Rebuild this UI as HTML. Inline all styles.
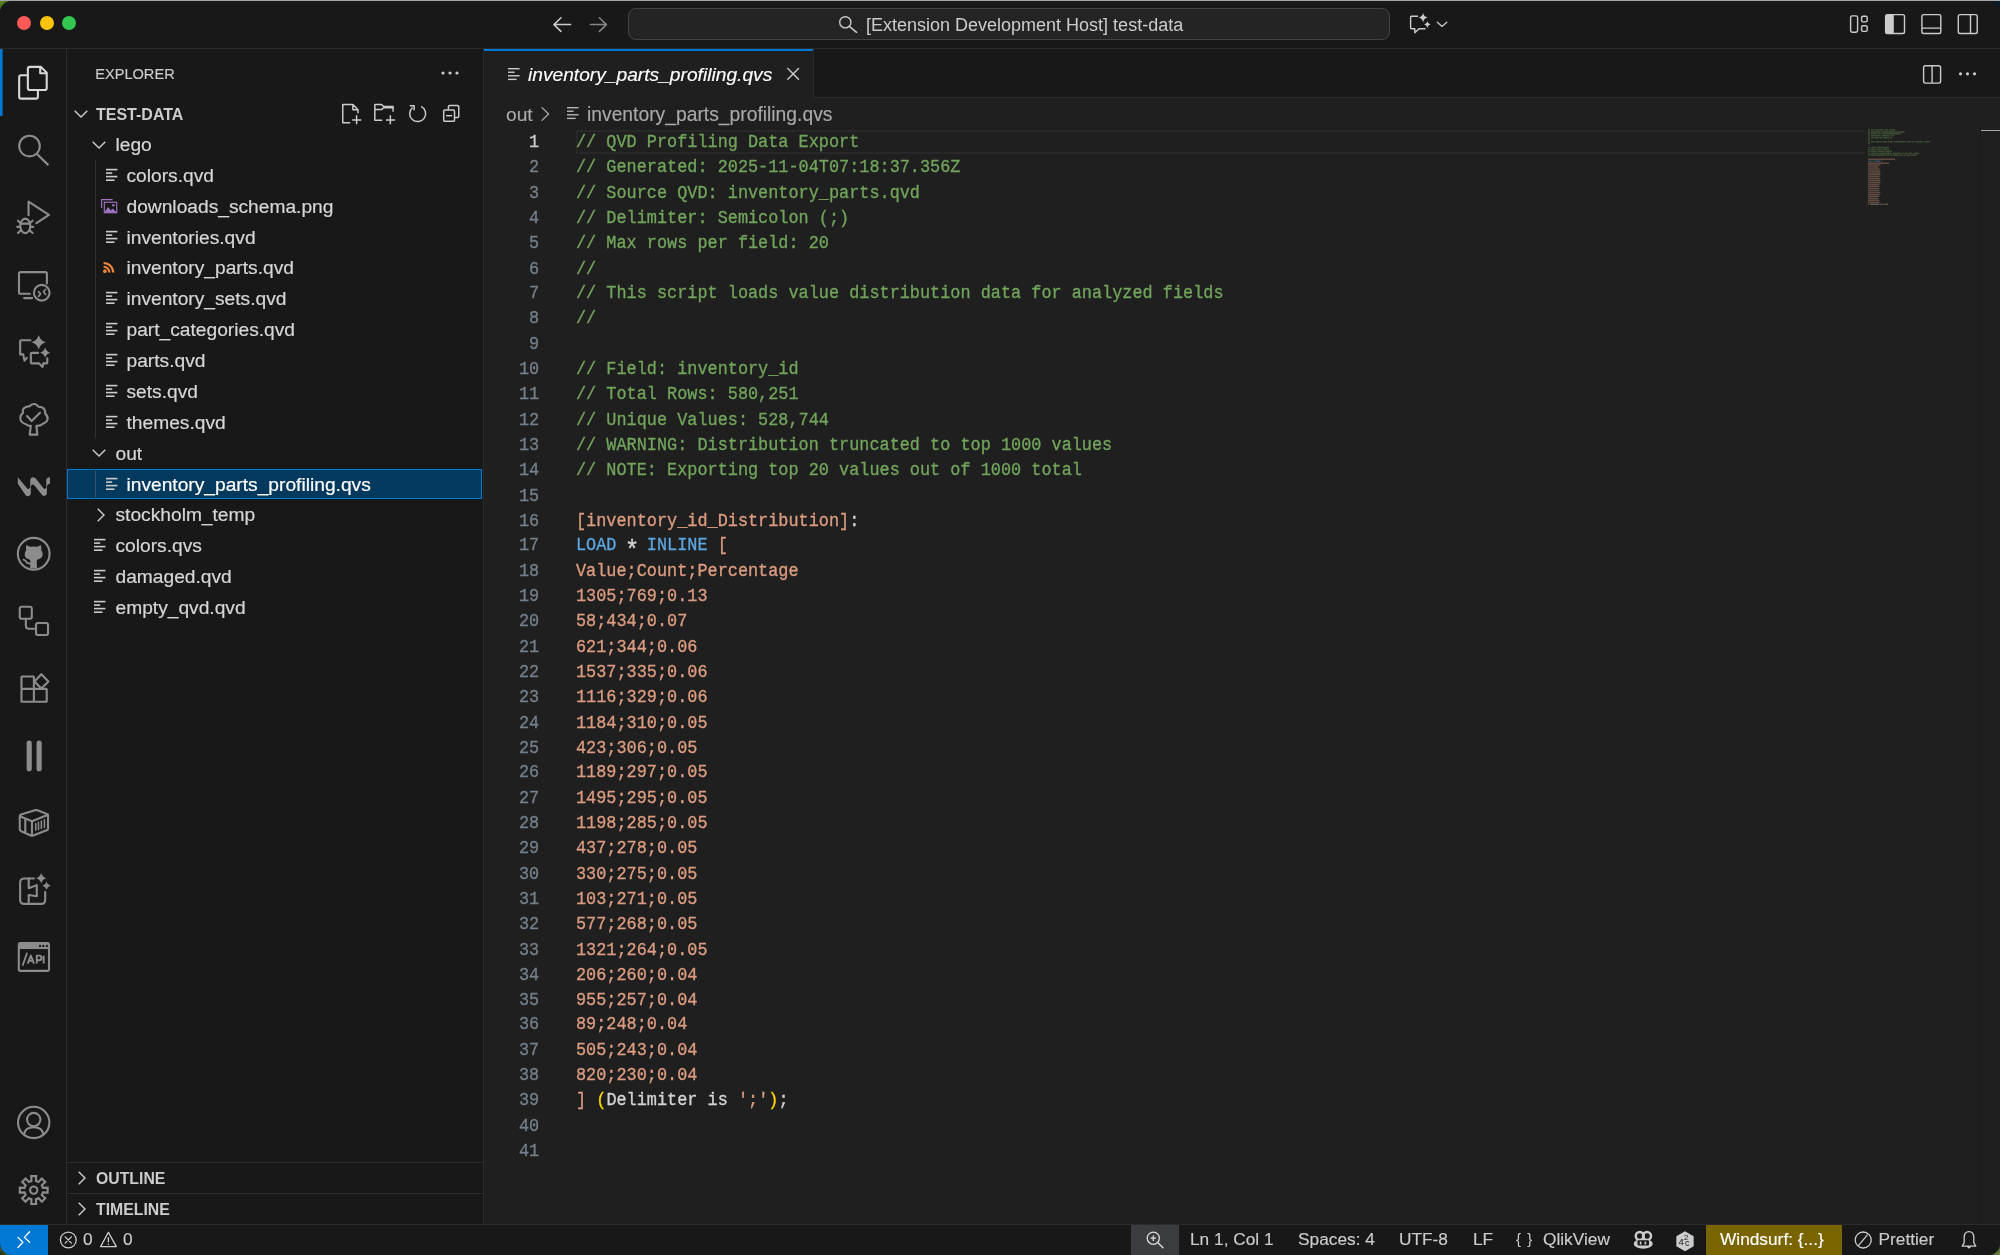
<!DOCTYPE html>
<html><head><meta charset="utf-8">
<style>
*{margin:0;padding:0;box-sizing:border-box}
html,body{width:2000px;height:1255px;overflow:hidden;background:#0b2a2a}
body{background:linear-gradient(#a4a4a4,#a4a4a4) 0 0/2000px 1px no-repeat,radial-gradient(circle at 0 0,#6a8a20 0,#3a6a20 8px,#0a2020 14px) 0 0/20px 20px no-repeat,radial-gradient(circle at 100% 0,#0a1a28 0,#06182a 14px) 100% 0/20px 20px no-repeat,radial-gradient(circle at 0 100%,#1a2a18 0,#6a7a30 12px) 0 100%/20px 20px no-repeat,radial-gradient(circle at 100% 100%,#7a8a40 0,#1a3a20 14px) 100% 100%/20px 20px no-repeat,#0b2a2a}
body{-webkit-font-smoothing:antialiased;position:relative;font-family:"Liberation Sans",sans-serif;color:#cccccc}
.abs{position:absolute}
#win{position:absolute;left:0;top:1px;width:2000px;height:1254px;background:#181818;border-radius:12px;overflow:hidden;will-change:transform}
#win>.abs{margin-top:-1px}
#title{left:0;top:0;width:2000px;height:49px;background:#181818;border-bottom:1px solid #2b2b2b}
.tl{position:absolute;top:15.9px;width:14px;height:14px;border-radius:50%}
#act{left:0;top:49px;width:67px;height:1175px;background:#181818;border-right:1px solid #2b2b2b}
#side{left:67px;top:49px;width:417px;height:1175px;background:#181818;border-right:1px solid #2b2b2b}
#editor{left:484px;top:49px;width:1516px;height:1175px;background:#1f1f1f}
#tabs{left:0;top:0;width:1516px;height:49px;background:#181818;border-bottom:1px solid #2b2b2b}
#status{left:0;top:1224px;width:2000px;height:31px;background:#181818;border-top:1px solid #2b2b2b;font-size:16.8px}
.row{position:absolute;left:0;width:416px;height:30.87px;line-height:30.87px;font-size:18.2px;white-space:nowrap;color:#cccccc;-webkit-text-stroke:0.2px;transform:translateY(0.9px)}
.code{position:absolute;left:92px;font-family:"Liberation Mono",monospace;font-size:16.88px;white-space:pre;line-height:22.327px;transform:scaleY(1.13);transform-origin:0 0;-webkit-text-stroke:0.3px}
.ln{position:absolute;left:0;width:55.2px;text-align:right;font-family:"Liberation Mono",monospace;font-size:16.85px;line-height:22.327px;color:#76808b;transform:scaleY(1.13);transform-origin:0 0;-webkit-text-stroke:0.3px}
.c{color:#72a55c}.k{color:#5ca6e0}.s{color:#dc9c80}.w{color:#d4d4d4}.y{color:#ffd700}
svg{position:absolute;overflow:visible}
</style></head><body>
<div id="win">
 <div id="title" class="abs">
  <div class="tl" style="left:17.2px;background:#ff5a57"></div>
  <div class="tl" style="left:39.8px;background:#fbc40c"></div>
  <div class="tl" style="left:62px;background:#33c650"></div>
<svg class="abs" style="left:0;top:0" width="2000" height="48"><path d="M561 17.8 L553.9 24.6 L561 31.4 M554 24.6 H570.6" fill="none" stroke="#cccccc" stroke-width="1.5" stroke-linecap="round" stroke-linejoin="round"/><path d="M599.4 17.8 L606.4 24.6 L599.4 31.4 M606.3 24.6 H590.4" fill="none" stroke="#868686" stroke-width="1.5" stroke-linecap="round" stroke-linejoin="round"/><path d="M1418 16.2 H1411.4 Q1410.6 16.2 1410.6 17 V27.8 Q1410.6 28.8 1411.4 28.8 H1414.8 V32.8 L1419 28.8 H1425.5" fill="none" stroke="#cccccc" stroke-width="1.4" stroke-linejoin="round"/><path d="M1423.1 12.8 Q1423.8 17 1428 17.6 Q1423.8 18.3 1423.1 22.4 Q1422.4 18.3 1418.3 17.6 Q1422.4 17 1423.1 12.8 Z" fill="#cccccc"/><path d="M1427.4 21.3 Q1427.9 24 1430.6 24.6 Q1427.9 25.1 1427.4 27.9 Q1426.9 25.1 1424.2 24.6 Q1426.9 24 1427.4 21.3 Z" fill="#cccccc"/><path d="M1437.3 22.2 L1442 26.4 L1446.8 22.2" fill="none" stroke="#cccccc" stroke-width="1.3" stroke-linecap="round" stroke-linejoin="round"/><g fill="none" stroke="#cccccc" stroke-width="1.4"><rect x="1850.6" y="15.9" width="7" height="16.3" rx="1.6"/><rect x="1861.6" y="16.3" width="5.6" height="5.6" rx="1.4"/><rect x="1861.6" y="25.8" width="5.6" height="5.6" rx="1.4"/><rect x="1885.6" y="14.6" width="18.9" height="18.9" rx="1.8"/><rect x="1921.9" y="14.6" width="18.9" height="18.9" rx="1.8"/><path d="M1922 28.1 H1940.8"/><rect x="1958.3" y="14.6" width="18.9" height="18.9" rx="1.8"/><path d="M1970.5 14.6 V33.5"/></g><rect x="1886" y="15" width="7.8" height="18.2" fill="#cccccc"/></svg>
<div class="abs" style="left:628px;top:8px;width:762px;height:32.4px;border:1px solid #444444;border-radius:8px;background:#242424"></div>
<svg class="abs" style="left:0;top:0" width="2000" height="48"><circle cx="845.3" cy="22.3" r="5.6" fill="none" stroke="#cccccc" stroke-width="1.4"/><path d="M849.3 26.4 L856.6 32.3" stroke="#cccccc" stroke-width="1.5" stroke-linecap="round"/></svg>
<div class="abs" style="left:866px;top:8.6px;height:32px;line-height:32px;font-size:18px;color:#cccccc;white-space:nowrap">[Extension Development Host] test-data</div>
 </div>
 <div id="act" class="abs"><svg class="abs" style="left:0;top:-49px" width="67" height="1255"><g transform="translate(10,60) scale(0.03824)"><path fill="none" stroke="#d7d7d7" stroke-width="55" stroke-linejoin="round" stroke-linecap="round" d="M810 180 H520 Q467 180 467 233 V732 Q467 785 520 785 H907 Q960 785 960 732 V330 Z M790 180 V345 H960"/><path fill="none" stroke="#d7d7d7" stroke-width="55" stroke-linejoin="round" stroke-linecap="round" d="M467 400 H293 Q240 400 240 453 V958 Q240 1010 293 1010 H678 Q730 1010 730 958 V785"/></g><g transform="translate(10,126) scale(0.03824)"><circle fill="none" stroke="#8c8c8c" stroke-width="55" stroke-linejoin="round" stroke-linecap="round" cx="510" cy="525" r="270"/><path fill="none" stroke="#8c8c8c" stroke-width="55" stroke-linejoin="round" stroke-linecap="round" d="M705 735 L990 1010"/></g><g transform="translate(10,193) scale(0.03824)"><path fill="none" stroke="#8c8c8c" stroke-width="55" stroke-linejoin="round" stroke-linecap="round" d="M485 580 V225 L1020 570 L690 790"/><ellipse fill="none" stroke="#8c8c8c" stroke-width="55" stroke-linejoin="round" stroke-linecap="round" cx="400" cy="860" rx="130" ry="190"/><path fill="none" stroke="#8c8c8c" stroke-width="55" stroke-linejoin="round" stroke-linecap="round" d="M270 800 H530 M210 725 L280 790 M590 725 L520 790 M190 885 H260 M540 885 H610 M210 1045 L280 980 M590 1045 L520 980"/></g><g transform="translate(10,261) scale(0.03824)"><path fill="none" stroke="#8c8c8c" stroke-width="55" stroke-linejoin="round" stroke-linecap="round" d="M520 855 H275 Q235 855 235 815 V330 Q235 290 275 290 H925 Q965 290 965 330 V590"/><path fill="none" stroke="#8c8c8c" stroke-width="55" stroke-linejoin="round" stroke-linecap="round" d="M370 970 H580"/><circle fill="none" stroke="#8c8c8c" stroke-width="55" stroke-linejoin="round" stroke-linecap="round" cx="830" cy="830" r="205"/><path fill="none" stroke="#8c8c8c" stroke-width="45" stroke-linejoin="round" stroke-linecap="round" d="M745 800 L800 860 L745 925 M930 745 L875 805 L930 875"/></g><g transform="translate(10,328) scale(0.03824)"><path fill="none" stroke="#8c8c8c" stroke-width="55" stroke-linejoin="round" stroke-linecap="round" d="M535 320 H290 Q265 320 265 345 V690 H345 L380 855 L440 780"/><path fill="#8c8c8c" d="M750 185 Q791.8 333.2 940 375 Q791.8 416.8 750 565 Q708.2 416.8 560 375 Q708.2 333.2 750 185 Z"/><path fill="#8c8c8c" d="M920 510 Q949.7 615.3 1055 645 Q949.7 674.7 920 780 Q890.3 674.7 785 645 Q890.3 615.3 920 510 Z"/><path fill="none" stroke="#8c8c8c" stroke-width="55" stroke-linejoin="round" stroke-linecap="round" d="M735 650 H570 Q545 650 545 675 V900 Q545 925 570 925 H760 L850 1020 L870 925 H950 Q975 925 975 900 V790"/></g><g transform="translate(10,396) scale(0.03824)"><path fill="none" stroke="#8c8c8c" stroke-width="55" stroke-linejoin="round" stroke-linecap="round" d="M545 780 Q470 790 420 740 Q300 700 275 620 Q250 500 340 445 Q310 320 420 285 Q500 260 520 265 Q560 200 640 210 Q710 220 745 280 Q860 280 900 350 Q930 410 915 455 Q990 520 985 600 Q970 690 870 720 Q800 790 690 780 L715 1010 H515 L545 780 Z"/><path fill="none" stroke="#8c8c8c" stroke-width="55" stroke-linejoin="round" stroke-linecap="round" d="M445 525 L565 655 L785 435"/></g><g transform="translate(10,463) scale(0.03824)"><path fill="#8c8c8c" d="M205 375 L440 655 Q470 690 505 670 Q530 655 530 620 L530 440 Q540 375 600 370 Q650 370 680 415 L865 650 Q895 690 930 670 Q950 655 950 625 L950 440 Q960 375 1045 370 L1045 545 Q1000 555 975 590 Q965 610 965 640 L965 800 Q955 865 890 865 Q860 865 835 830 L640 590 Q615 560 585 565 Q550 575 545 620 L545 800 Q535 865 470 870 Q430 870 405 835 L205 545 Z"/></g><g transform="translate(10,530) scale(0.03824)"><circle fill="none" stroke="#8c8c8c" stroke-width="55" stroke-linejoin="round" stroke-linecap="round" cx="620" cy="620" r="415"/><path fill="#8c8c8c" d="M430 395 L520 440 Q620 420 715 440 L805 395 Q830 470 815 520 Q860 580 855 640 Q850 740 740 765 Q705 775 700 800 L705 1000 H525 L530 800 Q525 775 490 765 Q385 740 385 640 Q380 580 425 520 Q405 470 430 395 Z"/><path fill="none" stroke="#8c8c8c" stroke-width="50" stroke-linecap="round" d="M355 775 Q400 785 425 830 Q455 880 520 875"/></g><g transform="translate(10,597) scale(0.03824)"><rect fill="none" stroke="#8c8c8c" stroke-width="55" stroke-linejoin="round" stroke-linecap="round" x="255" y="255" width="315" height="315" rx="55"/><rect fill="none" stroke="#8c8c8c" stroke-width="55" stroke-linejoin="round" stroke-linecap="round" x="680" y="680" width="315" height="315" rx="55"/><path fill="none" stroke="#8c8c8c" stroke-width="55" stroke-linejoin="round" stroke-linecap="round" d="M415 570 V760 Q415 830 490 830 H680"/></g><g transform="translate(10,665) scale(0.03824)"><path fill="none" stroke="#8c8c8c" stroke-width="55" stroke-linejoin="round" stroke-linecap="round" d="M300 625 V315 Q300 300 315 300 H610 Q625 300 625 315 V945 M300 625 H945 Q960 625 960 640 V945 Q960 960 945 960 H315 Q300 960 300 945 V625"/><path fill="none" stroke="#8c8c8c" stroke-width="55" stroke-linejoin="round" stroke-linecap="round" d="M820 240 L1005 430 L820 615 L640 430 Z"/></g><g transform="translate(10,732) scale(0.03824)"><path fill="none" stroke="#8c8c8c" stroke-width="135" stroke-linecap="round" d="M502 290 V960 M762 290 V960"/></g><g transform="translate(10,799) scale(0.03824)"><path fill="none" stroke="#8c8c8c" stroke-width="55" stroke-linejoin="round" stroke-linecap="round" d="M255 450 Q255 420 290 405 L650 295 Q690 285 720 295 L975 395 Q995 410 995 440 V780 Q995 800 975 810 L610 955 Q575 965 545 955 L280 835 Q255 820 255 800 Z M255 450 L575 580 L995 410 M575 580 V960 M400 520 V880"/><path fill="none" stroke="#8c8c8c" stroke-width="40" stroke-linecap="round" d="M675 640 V820 M745 610 V795 M820 575 V770 M900 545 V745"/></g><g transform="translate(10,866) scale(0.03824)"><path fill="none" stroke="#8c8c8c" stroke-width="55" stroke-linejoin="round" stroke-linecap="round" d="M625 325 H375 Q265 325 265 435 V880 Q265 990 375 990 H810 Q920 990 920 880 V680"/><path fill="none" stroke="#8c8c8c" stroke-width="55" stroke-linejoin="round" stroke-linecap="round" d="M490 325 V580 L700 500 V790 L490 760 V990"/><path fill="#8c8c8c" d="M815 185 Q844.7 290.3 950 320 Q844.7 349.7 815 455 Q785.3 349.7 680 320 Q785.3 290.3 815 185 Z"/><path fill="#8c8c8c" d="M955 410 Q978.1 491.9 1060 515 Q978.1 538.1 955 620 Q931.9 538.1 850 515 Q931.9 491.9 955 410 Z"/></g><g transform="translate(10,933) scale(0.03824)"><rect fill="none" stroke="#8c8c8c" stroke-width="55" stroke-linejoin="round" stroke-linecap="round" x="230" y="265" width="790" height="725" rx="45"/><rect fill="#8c8c8c" x="230" y="265" width="790" height="155"/><circle fill="#181818" cx="785" cy="340" r="30"/><circle fill="#181818" cx="870" cy="340" r="30"/><circle fill="#181818" cx="965" cy="340" r="30"/><path fill="none" stroke="#8c8c8c" stroke-width="48" stroke-linecap="round" d="M335 835 L440 535"/><path fill="none" stroke="#8c8c8c" stroke-width="50" stroke-linejoin="round" d="M462 800 L545 590 L628 800 M495 730 H597 M700 800 V592 H765 Q822 592 822 652 Q822 712 765 712 H700 M880 592 V800"/></g><g transform="translate(10,1098) scale(0.03824)"><circle fill="none" stroke="#8c8c8c" stroke-width="55" stroke-linejoin="round" stroke-linecap="round" cx="620" cy="640" r="410"/><circle fill="none" stroke="#8c8c8c" stroke-width="55" stroke-linejoin="round" stroke-linecap="round" cx="620" cy="565" r="175"/><path fill="none" stroke="#8c8c8c" stroke-width="55" stroke-linejoin="round" stroke-linecap="round" d="M370 955 Q390 765 620 765 Q850 765 870 955"/></g><g transform="translate(10,1166) scale(0.03824)"><path fill="none" stroke="#8c8c8c" stroke-width="55" stroke-linejoin="miter" d="M526 404 L561 392 L556 266 L684 266 L679 392 L714 404 L746 420 L832 327 L923 418 L830 504 L846 536 L858 571 L984 566 L984 694 L858 689 L846 724 L830 756 L923 842 L832 933 L746 840 L714 856 L679 868 L684 994 L556 994 L561 868 L526 856 L494 840 L408 933 L317 842 L410 756 L394 724 L382 689 L256 694 L256 566 L382 571 L394 536 L410 504 L317 418 L408 327 L494 420 Z"/><circle fill="none" stroke="#8c8c8c" stroke-width="55" stroke-linejoin="round" stroke-linecap="round" cx="620" cy="630" r="95"/></g><rect x="0" y="49" width="2.6" height="67" fill="#0078d4"/></svg></div>
 <div id="side" class="abs">
<div class="abs" style="left:28.2px;top:1px;height:49px;line-height:49px;font-size:14.6px;color:#cccccc;transform:scaleY(1.06);-webkit-text-stroke:0.15px">EXPLORER</div>
<svg class="abs" style="left:374px;top:22px" width="18" height="4"><circle cx="2" cy="2" r="1.6" fill="#cccccc"/><circle cx="9" cy="2" r="1.6" fill="#cccccc"/><circle cx="16" cy="2" r="1.6" fill="#cccccc"/></svg>
<svg class="abs" style="left:7px;top:61px" width="14" height="8" viewBox="0 0 14 8"><path d="M0.7 0.7 L7 7 L13.3 0.7" fill="none" stroke="#cccccc" stroke-width="1.4"/></svg>
<svg class="abs" style="left:268px;top:49px;overflow:visible" width="140" height="34"><g transform="scale(0.06752)"><path fill="none" stroke="#cccccc" stroke-width="22" stroke-linejoin="round" d="M225 365 H115 V95 H265 L340 175 V225 M265 95 V175 H340 M320 255 V390 M255 325 H390"/><path fill="none" stroke="#cccccc" stroke-width="22" stroke-linejoin="round" d="M700 330 H590 V95 H690 L720 125 H860 V205 M590 172 H690 L720 145 H860 M820 255 V390 M755 325 H890"/><path fill="none" stroke="#cccccc" stroke-width="22" stroke-linejoin="round" d="M1275 125 A118 118 0 1 1 1150 140 M1108 115 H1172 V180"/><path fill="none" stroke="#cccccc" stroke-width="22" stroke-linejoin="round" d="M1680 175 V130 Q1680 112 1698 112 H1815 Q1833 112 1833 130 V270 Q1833 288 1815 288 H1770"/><rect fill="none" stroke="#cccccc" stroke-width="22" stroke-linejoin="round" x="1610" y="178" width="160" height="168" rx="18"/><path fill="none" stroke="#cccccc" stroke-width="22" stroke-linejoin="round" d="M1645 262 H1735"/></g></svg>
<div class="abs" style="left:29px;top:51px;height:30.87px;line-height:30.87px;font-size:16px;font-weight:bold;color:#cccccc;transform:scaleY(1.04)">TEST-DATA</div>
<div class="abs" style="left:0;top:419.57px;width:415px;height:30.87px;background:#04395e;border:1px solid #0078d4"></div>
<div class="abs" style="left:28.2px;top:110.87px;width:1px;height:277.83px;background:#313131"></div>
<div class="abs" style="left:28.2px;top:419.57px;width:1px;height:30.87px;background:#3a5068"></div>
<svg class="abs" style="left:25px;top:91.50px" width="14" height="8" viewBox="0 0 14 8"><path d="M0.7 0.7 L7 7 L13.3 0.7" fill="none" stroke="#cccccc" stroke-width="1.4"/></svg>
<div class="row" style="left:48.5px;top:80.00px;color:#d6d6d6;width:auto;font-size:19.2px">lego</div>
<svg class="abs" style="left:38.900000000000006px;top:119.87px" width="12" height="12" viewBox="0 0 12 12"><g fill="#cccccc"><rect x="0" y="-0.2" width="11.4" height="1.6"/><rect x="0" y="3.3" width="6.2" height="1.6"/><rect x="0" y="6.8" width="11.4" height="1.6"/><rect x="0" y="10.4" width="8.5" height="1.6"/></g></svg>
<div class="row" style="left:59.5px;top:110.87px;color:#d6d6d6;width:auto;font-size:19.2px">colors.qvd</div>
<svg class="abs" style="left:33.599999999999994px;top:150.04px" width="16.2" height="14.3" viewBox="0 0 17 15"><path d="M0.6 9.5 V0.6 H12.2" fill="none" stroke="#a074c4" stroke-width="1.2"/><rect x="3.5" y="3.4" width="13" height="11" fill="none" stroke="#a074c4" stroke-width="1.2"/><path d="M3.5 14.4 L7.3 8.4 L10.5 12.2 L12.4 10 L16.5 14.4 Z" fill="#a074c4"/><circle cx="13" cy="6.6" r="1.3" fill="#a074c4"/></svg>
<div class="row" style="left:59.5px;top:141.74px;color:#d6d6d6;width:auto;font-size:19.2px">downloads_schema.png</div>
<svg class="abs" style="left:38.900000000000006px;top:181.61px" width="12" height="12" viewBox="0 0 12 12"><g fill="#cccccc"><rect x="0" y="-0.2" width="11.4" height="1.6"/><rect x="0" y="3.3" width="6.2" height="1.6"/><rect x="0" y="6.8" width="11.4" height="1.6"/><rect x="0" y="10.4" width="8.5" height="1.6"/></g></svg>
<div class="row" style="left:59.5px;top:172.61px;color:#d6d6d6;width:auto;font-size:19.2px">inventories.qvd</div>
<svg class="abs" style="left:0;top:0;overflow:visible" width="1" height="1"><circle cx="37.90" cy="222.20" r="1.85" fill="#f0863a"/><path d="M36.60 217.80 A5.8 5.8 0 0 1 42.40 223.60" fill="none" stroke="#f0863a" stroke-width="2.1" stroke-linecap="butt"/><path d="M36.60 214.00 A9.6 9.6 0 0 1 46.20 223.60" fill="none" stroke="#f0863a" stroke-width="2.1" stroke-linecap="butt"/></svg>
<div class="row" style="left:59.5px;top:203.48px;color:#d6d6d6;width:auto;font-size:19.2px">inventory_parts.qvd</div>
<svg class="abs" style="left:38.900000000000006px;top:243.35px" width="12" height="12" viewBox="0 0 12 12"><g fill="#cccccc"><rect x="0" y="-0.2" width="11.4" height="1.6"/><rect x="0" y="3.3" width="6.2" height="1.6"/><rect x="0" y="6.8" width="11.4" height="1.6"/><rect x="0" y="10.4" width="8.5" height="1.6"/></g></svg>
<div class="row" style="left:59.5px;top:234.35px;color:#d6d6d6;width:auto;font-size:19.2px">inventory_sets.qvd</div>
<svg class="abs" style="left:38.900000000000006px;top:274.22px" width="12" height="12" viewBox="0 0 12 12"><g fill="#cccccc"><rect x="0" y="-0.2" width="11.4" height="1.6"/><rect x="0" y="3.3" width="6.2" height="1.6"/><rect x="0" y="6.8" width="11.4" height="1.6"/><rect x="0" y="10.4" width="8.5" height="1.6"/></g></svg>
<div class="row" style="left:59.5px;top:265.22px;color:#d6d6d6;width:auto;font-size:19.2px">part_categories.qvd</div>
<svg class="abs" style="left:38.900000000000006px;top:305.09px" width="12" height="12" viewBox="0 0 12 12"><g fill="#cccccc"><rect x="0" y="-0.2" width="11.4" height="1.6"/><rect x="0" y="3.3" width="6.2" height="1.6"/><rect x="0" y="6.8" width="11.4" height="1.6"/><rect x="0" y="10.4" width="8.5" height="1.6"/></g></svg>
<div class="row" style="left:59.5px;top:296.09px;color:#d6d6d6;width:auto;font-size:19.2px">parts.qvd</div>
<svg class="abs" style="left:38.900000000000006px;top:335.96px" width="12" height="12" viewBox="0 0 12 12"><g fill="#cccccc"><rect x="0" y="-0.2" width="11.4" height="1.6"/><rect x="0" y="3.3" width="6.2" height="1.6"/><rect x="0" y="6.8" width="11.4" height="1.6"/><rect x="0" y="10.4" width="8.5" height="1.6"/></g></svg>
<div class="row" style="left:59.5px;top:326.96px;color:#d6d6d6;width:auto;font-size:19.2px">sets.qvd</div>
<svg class="abs" style="left:38.900000000000006px;top:366.83px" width="12" height="12" viewBox="0 0 12 12"><g fill="#cccccc"><rect x="0" y="-0.2" width="11.4" height="1.6"/><rect x="0" y="3.3" width="6.2" height="1.6"/><rect x="0" y="6.8" width="11.4" height="1.6"/><rect x="0" y="10.4" width="8.5" height="1.6"/></g></svg>
<div class="row" style="left:59.5px;top:357.83px;color:#d6d6d6;width:auto;font-size:19.2px">themes.qvd</div>
<svg class="abs" style="left:25px;top:400.20px" width="14" height="8" viewBox="0 0 14 8"><path d="M0.7 0.7 L7 7 L13.3 0.7" fill="none" stroke="#cccccc" stroke-width="1.4"/></svg>
<div class="row" style="left:48.5px;top:388.70px;color:#d6d6d6;width:auto;font-size:19.2px">out</div>
<svg class="abs" style="left:38.900000000000006px;top:428.57px" width="12" height="12" viewBox="0 0 12 12"><g fill="#cccccc"><rect x="0" y="-0.2" width="11.4" height="1.6"/><rect x="0" y="3.3" width="6.2" height="1.6"/><rect x="0" y="6.8" width="11.4" height="1.6"/><rect x="0" y="10.4" width="8.5" height="1.6"/></g></svg>
<div class="row" style="left:59.5px;top:419.57px;color:#ffffff;width:auto;font-size:19.2px">inventory_parts_profiling.qvs</div>
<svg class="abs" style="left:29.5px;top:458.94px" width="8" height="14" viewBox="0 0 8 14"><path d="M0.7 0.7 L7 7 L0.7 13.3" fill="none" stroke="#cccccc" stroke-width="1.4"/></svg>
<div class="row" style="left:48.5px;top:450.44px;color:#d6d6d6;width:auto;font-size:19.2px">stockholm_temp</div>
<svg class="abs" style="left:27.400000000000006px;top:490.31px" width="12" height="12" viewBox="0 0 12 12"><g fill="#cccccc"><rect x="0" y="-0.2" width="11.4" height="1.6"/><rect x="0" y="3.3" width="6.2" height="1.6"/><rect x="0" y="6.8" width="11.4" height="1.6"/><rect x="0" y="10.4" width="8.5" height="1.6"/></g></svg>
<div class="row" style="left:48.5px;top:481.31px;color:#d6d6d6;width:auto;font-size:19.2px">colors.qvs</div>
<svg class="abs" style="left:27.400000000000006px;top:521.18px" width="12" height="12" viewBox="0 0 12 12"><g fill="#cccccc"><rect x="0" y="-0.2" width="11.4" height="1.6"/><rect x="0" y="3.3" width="6.2" height="1.6"/><rect x="0" y="6.8" width="11.4" height="1.6"/><rect x="0" y="10.4" width="8.5" height="1.6"/></g></svg>
<div class="row" style="left:48.5px;top:512.18px;color:#d6d6d6;width:auto;font-size:19.2px">damaged.qvd</div>
<svg class="abs" style="left:27.400000000000006px;top:552.05px" width="12" height="12" viewBox="0 0 12 12"><g fill="#cccccc"><rect x="0" y="-0.2" width="11.4" height="1.6"/><rect x="0" y="3.3" width="6.2" height="1.6"/><rect x="0" y="6.8" width="11.4" height="1.6"/><rect x="0" y="10.4" width="8.5" height="1.6"/></g></svg>
<div class="row" style="left:48.5px;top:543.05px;color:#d6d6d6;width:auto;font-size:19.2px">empty_qvd.qvd</div>
<div class="abs" style="left:0;top:1113px;width:416px;height:1px;background:#2b2b2b"></div>
<div class="abs" style="left:0;top:1144px;width:416px;height:1px;background:#2b2b2b"></div>
<svg class="abs" style="left:10.7px;top:1121.8px" width="8" height="14" viewBox="0 0 8 14"><path d="M0.7 0.7 L7 7 L0.7 13.3" fill="none" stroke="#cccccc" stroke-width="1.4"/></svg>
<div class="abs" style="left:29px;top:1115px;height:30px;line-height:30px;font-size:15.8px;font-weight:bold;color:#cccccc">OUTLINE</div>
<svg class="abs" style="left:10.7px;top:1152.8px" width="8" height="14" viewBox="0 0 8 14"><path d="M0.7 0.7 L7 7 L0.7 13.3" fill="none" stroke="#cccccc" stroke-width="1.4"/></svg>
<div class="abs" style="left:29px;top:1146px;height:30px;line-height:30px;font-size:15.8px;font-weight:bold;color:#cccccc">TIMELINE</div>
</div>
 <div id="editor" class="abs">
  <div id="tabs" class="abs"></div>
<div class="abs" style="left:0;top:0;width:330px;height:49px;background:#1f1f1f;border-right:1px solid #2b2b2b"></div>
<div class="abs" style="left:0;top:0;width:329px;height:2px;background:#0078d4"></div>
<svg class="abs" style="left:24.19999999999999px;top:18.599999999999994px" width="12" height="12" viewBox="0 0 12 12"><g fill="#cccccc"><rect x="0" y="0" width="11.6" height="1.4"/><rect x="0" y="3.55" width="6.6" height="1.4"/><rect x="0" y="7.1" width="11.6" height="1.4"/><rect x="0" y="10.7" width="8.6" height="1.4"/></g></svg>
<div class="abs" style="left:44px;top:1px;height:49px;line-height:49px;font-size:19.2px;font-style:italic;color:#ffffff;white-space:nowrap;-webkit-text-stroke:0.15px">inventory_parts_profiling.qvs</div>
<svg class="abs" style="left:0;top:0" width="1516" height="49"><path d="M303.79999999999995 19.5 L314.5 30.200000000000003 M314.5 19.5 L303.79999999999995 30.200000000000003" stroke="#cccccc" stroke-width="1.4" stroke-linecap="round"/><rect x="1439.6" y="16.700000000000003" width="17" height="17.4" rx="1.8" fill="none" stroke="#cccccc" stroke-width="1.4"/><path d="M1448.1 16.700000000000003 V34.099999999999994" stroke="#cccccc" stroke-width="1.4"/><circle cx="1476.5" cy="24.799999999999997" r="1.6" fill="#cccccc"/><circle cx="1483.5" cy="24.799999999999997" r="1.6" fill="#cccccc"/><circle cx="1490.5" cy="24.799999999999997" r="1.6" fill="#cccccc"/></svg>
<div class="abs" style="left:22px;top:49.5px;height:32px;line-height:32px;font-size:19.2px;color:#a9a9a9;white-space:nowrap;-webkit-text-stroke:0.15px">out</div>
<svg class="abs" style="left:0;top:0" width="200" height="100"><path d="M58 58.599999999999994 L64.60000000000002 65 L58 71.4" fill="none" stroke="#a9a9a9" stroke-width="1.3" stroke-linecap="round" stroke-linejoin="round"/></svg>
<svg class="abs" style="left:82.70000000000005px;top:58.2px" width="12" height="12" viewBox="0 0 12 12"><g fill="#b5b5b5"><rect x="0" y="0" width="11.6" height="1.4"/><rect x="0" y="3.55" width="6.6" height="1.4"/><rect x="0" y="7.1" width="11.6" height="1.4"/><rect x="0" y="10.7" width="8.6" height="1.4"/></g></svg>
<div class="abs" style="left:103px;top:49.5px;height:32px;line-height:32px;font-size:19.3px;color:#a9a9a9;white-space:nowrap;-webkit-text-stroke:0.15px">inventory_parts_profiling.qvs</div>
<svg class="abs" style="left:0;top:0" width="1516" height="300"><g opacity="0.45"><path d="M1383.90 80.20h0.8v1.5h-0.8zM1384.87 80.20h0.8v1.5h-0.8z" fill="#6a9955"/><path d="M1386.81 80.20h0.8v1.5h-0.8zM1387.78 80.20h0.8v1.5h-0.8zM1388.75 80.20h0.8v1.5h-0.8z" fill="#6a9955"/><path d="M1390.69 80.20h0.8v1.5h-0.8zM1391.66 80.20h0.8v1.5h-0.8zM1392.63 80.20h0.8v1.5h-0.8zM1393.60 80.20h0.8v1.5h-0.8zM1394.57 80.20h0.8v1.5h-0.8zM1395.54 80.20h0.8v1.5h-0.8zM1396.51 80.20h0.8v1.5h-0.8zM1397.48 80.20h0.8v1.5h-0.8zM1398.45 80.20h0.8v1.5h-0.8z" fill="#6a9955"/><path d="M1400.39 80.20h0.8v1.5h-0.8zM1401.36 80.20h0.8v1.5h-0.8zM1402.33 80.20h0.8v1.5h-0.8zM1403.30 80.20h0.8v1.5h-0.8z" fill="#6a9955"/><path d="M1405.24 80.20h0.8v1.5h-0.8zM1406.21 80.20h0.8v1.5h-0.8zM1407.18 80.20h0.8v1.5h-0.8zM1408.15 80.20h0.8v1.5h-0.8zM1409.12 80.20h0.8v1.5h-0.8zM1410.09 80.20h0.8v1.5h-0.8z" fill="#6a9955"/><path d="M1383.90 82.15h0.8v1.5h-0.8zM1384.87 82.15h0.8v1.5h-0.8z" fill="#6a9955"/><path d="M1386.81 82.15h0.8v1.5h-0.8zM1387.78 82.15h0.8v1.5h-0.8zM1388.75 82.15h0.8v1.5h-0.8zM1389.72 82.15h0.8v1.5h-0.8zM1390.69 82.15h0.8v1.5h-0.8zM1391.66 82.15h0.8v1.5h-0.8zM1392.63 82.15h0.8v1.5h-0.8zM1393.60 82.15h0.8v1.5h-0.8zM1394.57 82.15h0.8v1.5h-0.8zM1395.54 82.15h0.8v1.5h-0.8z" fill="#6a9955"/><path d="M1397.48 82.15h0.8v1.5h-0.8zM1398.45 82.15h0.8v1.5h-0.8zM1399.42 82.15h0.8v1.5h-0.8zM1400.39 82.15h0.8v1.5h-0.8zM1401.36 82.15h0.8v1.5h-0.8zM1402.33 82.15h0.8v1.5h-0.8zM1403.30 82.15h0.8v1.5h-0.8zM1404.27 82.15h0.8v1.5h-0.8zM1405.24 82.15h0.8v1.5h-0.8zM1406.21 82.15h0.8v1.5h-0.8zM1407.18 82.15h0.8v1.5h-0.8zM1408.15 82.15h0.8v1.5h-0.8zM1409.12 82.15h0.8v1.5h-0.8zM1410.09 82.15h0.8v1.5h-0.8zM1411.06 82.15h0.8v1.5h-0.8zM1412.03 82.15h0.8v1.5h-0.8zM1413.00 82.15h0.8v1.5h-0.8zM1413.97 82.15h0.8v1.5h-0.8zM1414.94 82.15h0.8v1.5h-0.8zM1415.91 82.15h0.8v1.5h-0.8zM1416.88 82.15h0.8v1.5h-0.8zM1417.85 82.15h0.8v1.5h-0.8zM1418.82 82.15h0.8v1.5h-0.8zM1419.79 82.15h0.8v1.5h-0.8z" fill="#6a9955"/><path d="M1383.90 84.11h0.8v1.5h-0.8zM1384.87 84.11h0.8v1.5h-0.8z" fill="#6a9955"/><path d="M1386.81 84.11h0.8v1.5h-0.8zM1387.78 84.11h0.8v1.5h-0.8zM1388.75 84.11h0.8v1.5h-0.8zM1389.72 84.11h0.8v1.5h-0.8zM1390.69 84.11h0.8v1.5h-0.8zM1391.66 84.11h0.8v1.5h-0.8z" fill="#6a9955"/><path d="M1393.60 84.11h0.8v1.5h-0.8zM1394.57 84.11h0.8v1.5h-0.8zM1395.54 84.11h0.8v1.5h-0.8zM1396.51 84.11h0.8v1.5h-0.8z" fill="#6a9955"/><path d="M1398.45 84.11h0.8v1.5h-0.8zM1399.42 84.11h0.8v1.5h-0.8zM1400.39 84.11h0.8v1.5h-0.8zM1401.36 84.11h0.8v1.5h-0.8zM1402.33 84.11h0.8v1.5h-0.8zM1403.30 84.11h0.8v1.5h-0.8zM1404.27 84.11h0.8v1.5h-0.8zM1405.24 84.11h0.8v1.5h-0.8zM1406.21 84.11h0.8v1.5h-0.8zM1407.18 84.11h0.8v1.5h-0.8zM1408.15 84.11h0.8v1.5h-0.8zM1409.12 84.11h0.8v1.5h-0.8zM1410.09 84.11h0.8v1.5h-0.8zM1411.06 84.11h0.8v1.5h-0.8zM1412.03 84.11h0.8v1.5h-0.8zM1413.00 84.11h0.8v1.5h-0.8zM1413.97 84.11h0.8v1.5h-0.8zM1414.94 84.11h0.8v1.5h-0.8zM1415.91 84.11h0.8v1.5h-0.8z" fill="#6a9955"/><path d="M1383.90 86.06h0.8v1.5h-0.8zM1384.87 86.06h0.8v1.5h-0.8z" fill="#6a9955"/><path d="M1386.81 86.06h0.8v1.5h-0.8zM1387.78 86.06h0.8v1.5h-0.8zM1388.75 86.06h0.8v1.5h-0.8zM1389.72 86.06h0.8v1.5h-0.8zM1390.69 86.06h0.8v1.5h-0.8zM1391.66 86.06h0.8v1.5h-0.8zM1392.63 86.06h0.8v1.5h-0.8zM1393.60 86.06h0.8v1.5h-0.8zM1394.57 86.06h0.8v1.5h-0.8zM1395.54 86.06h0.8v1.5h-0.8z" fill="#6a9955"/><path d="M1397.48 86.06h0.8v1.5h-0.8zM1398.45 86.06h0.8v1.5h-0.8zM1399.42 86.06h0.8v1.5h-0.8zM1400.39 86.06h0.8v1.5h-0.8zM1401.36 86.06h0.8v1.5h-0.8zM1402.33 86.06h0.8v1.5h-0.8zM1403.30 86.06h0.8v1.5h-0.8zM1404.27 86.06h0.8v1.5h-0.8zM1405.24 86.06h0.8v1.5h-0.8z" fill="#6a9955"/><path d="M1407.18 86.06h0.8v1.5h-0.8zM1408.15 86.06h0.8v1.5h-0.8zM1409.12 86.06h0.8v1.5h-0.8z" fill="#6a9955"/><path d="M1383.90 88.01h0.8v1.5h-0.8zM1384.87 88.01h0.8v1.5h-0.8z" fill="#6a9955"/><path d="M1386.81 88.01h0.8v1.5h-0.8zM1387.78 88.01h0.8v1.5h-0.8zM1388.75 88.01h0.8v1.5h-0.8z" fill="#6a9955"/><path d="M1390.69 88.01h0.8v1.5h-0.8zM1391.66 88.01h0.8v1.5h-0.8zM1392.63 88.01h0.8v1.5h-0.8zM1393.60 88.01h0.8v1.5h-0.8z" fill="#6a9955"/><path d="M1395.54 88.01h0.8v1.5h-0.8zM1396.51 88.01h0.8v1.5h-0.8zM1397.48 88.01h0.8v1.5h-0.8z" fill="#6a9955"/><path d="M1399.42 88.01h0.8v1.5h-0.8zM1400.39 88.01h0.8v1.5h-0.8zM1401.36 88.01h0.8v1.5h-0.8zM1402.33 88.01h0.8v1.5h-0.8zM1403.30 88.01h0.8v1.5h-0.8zM1404.27 88.01h0.8v1.5h-0.8z" fill="#6a9955"/><path d="M1406.21 88.01h0.8v1.5h-0.8zM1407.18 88.01h0.8v1.5h-0.8z" fill="#6a9955"/><path d="M1383.90 89.97h0.8v1.5h-0.8zM1384.87 89.97h0.8v1.5h-0.8z" fill="#6a9955"/><path d="M1383.90 91.92h0.8v1.5h-0.8zM1384.87 91.92h0.8v1.5h-0.8z" fill="#6a9955"/><path d="M1386.81 91.92h0.8v1.5h-0.8zM1387.78 91.92h0.8v1.5h-0.8zM1388.75 91.92h0.8v1.5h-0.8zM1389.72 91.92h0.8v1.5h-0.8z" fill="#6a9955"/><path d="M1391.66 91.92h0.8v1.5h-0.8zM1392.63 91.92h0.8v1.5h-0.8zM1393.60 91.92h0.8v1.5h-0.8zM1394.57 91.92h0.8v1.5h-0.8zM1395.54 91.92h0.8v1.5h-0.8zM1396.51 91.92h0.8v1.5h-0.8z" fill="#6a9955"/><path d="M1398.45 91.92h0.8v1.5h-0.8zM1399.42 91.92h0.8v1.5h-0.8zM1400.39 91.92h0.8v1.5h-0.8zM1401.36 91.92h0.8v1.5h-0.8zM1402.33 91.92h0.8v1.5h-0.8z" fill="#6a9955"/><path d="M1404.27 91.92h0.8v1.5h-0.8zM1405.24 91.92h0.8v1.5h-0.8zM1406.21 91.92h0.8v1.5h-0.8zM1407.18 91.92h0.8v1.5h-0.8zM1408.15 91.92h0.8v1.5h-0.8z" fill="#6a9955"/><path d="M1410.09 91.92h0.8v1.5h-0.8zM1411.06 91.92h0.8v1.5h-0.8zM1412.03 91.92h0.8v1.5h-0.8zM1413.00 91.92h0.8v1.5h-0.8zM1413.97 91.92h0.8v1.5h-0.8zM1414.94 91.92h0.8v1.5h-0.8zM1415.91 91.92h0.8v1.5h-0.8zM1416.88 91.92h0.8v1.5h-0.8zM1417.85 91.92h0.8v1.5h-0.8zM1418.82 91.92h0.8v1.5h-0.8zM1419.79 91.92h0.8v1.5h-0.8zM1420.76 91.92h0.8v1.5h-0.8z" fill="#6a9955"/><path d="M1422.70 91.92h0.8v1.5h-0.8zM1423.67 91.92h0.8v1.5h-0.8zM1424.64 91.92h0.8v1.5h-0.8zM1425.61 91.92h0.8v1.5h-0.8z" fill="#6a9955"/><path d="M1427.55 91.92h0.8v1.5h-0.8zM1428.52 91.92h0.8v1.5h-0.8zM1429.49 91.92h0.8v1.5h-0.8z" fill="#6a9955"/><path d="M1431.43 91.92h0.8v1.5h-0.8zM1432.40 91.92h0.8v1.5h-0.8zM1433.37 91.92h0.8v1.5h-0.8zM1434.34 91.92h0.8v1.5h-0.8zM1435.31 91.92h0.8v1.5h-0.8zM1436.28 91.92h0.8v1.5h-0.8zM1437.25 91.92h0.8v1.5h-0.8zM1438.22 91.92h0.8v1.5h-0.8z" fill="#6a9955"/><path d="M1440.16 91.92h0.8v1.5h-0.8zM1441.13 91.92h0.8v1.5h-0.8zM1442.10 91.92h0.8v1.5h-0.8zM1443.07 91.92h0.8v1.5h-0.8zM1444.04 91.92h0.8v1.5h-0.8zM1445.01 91.92h0.8v1.5h-0.8z" fill="#6a9955"/><path d="M1383.90 93.87h0.8v1.5h-0.8zM1384.87 93.87h0.8v1.5h-0.8z" fill="#6a9955"/><path d="M1383.90 97.78h0.8v1.5h-0.8zM1384.87 97.78h0.8v1.5h-0.8z" fill="#6a9955"/><path d="M1386.81 97.78h0.8v1.5h-0.8zM1387.78 97.78h0.8v1.5h-0.8zM1388.75 97.78h0.8v1.5h-0.8zM1389.72 97.78h0.8v1.5h-0.8zM1390.69 97.78h0.8v1.5h-0.8zM1391.66 97.78h0.8v1.5h-0.8z" fill="#6a9955"/><path d="M1393.60 97.78h0.8v1.5h-0.8zM1394.57 97.78h0.8v1.5h-0.8zM1395.54 97.78h0.8v1.5h-0.8zM1396.51 97.78h0.8v1.5h-0.8zM1397.48 97.78h0.8v1.5h-0.8zM1398.45 97.78h0.8v1.5h-0.8zM1399.42 97.78h0.8v1.5h-0.8zM1400.39 97.78h0.8v1.5h-0.8zM1401.36 97.78h0.8v1.5h-0.8zM1402.33 97.78h0.8v1.5h-0.8zM1403.30 97.78h0.8v1.5h-0.8zM1404.27 97.78h0.8v1.5h-0.8z" fill="#6a9955"/><path d="M1383.90 99.73h0.8v1.5h-0.8zM1384.87 99.73h0.8v1.5h-0.8z" fill="#6a9955"/><path d="M1386.81 99.73h0.8v1.5h-0.8zM1387.78 99.73h0.8v1.5h-0.8zM1388.75 99.73h0.8v1.5h-0.8zM1389.72 99.73h0.8v1.5h-0.8zM1390.69 99.73h0.8v1.5h-0.8z" fill="#6a9955"/><path d="M1392.63 99.73h0.8v1.5h-0.8zM1393.60 99.73h0.8v1.5h-0.8zM1394.57 99.73h0.8v1.5h-0.8zM1395.54 99.73h0.8v1.5h-0.8zM1396.51 99.73h0.8v1.5h-0.8z" fill="#6a9955"/><path d="M1398.45 99.73h0.8v1.5h-0.8zM1399.42 99.73h0.8v1.5h-0.8zM1400.39 99.73h0.8v1.5h-0.8zM1401.36 99.73h0.8v1.5h-0.8zM1402.33 99.73h0.8v1.5h-0.8zM1403.30 99.73h0.8v1.5h-0.8zM1404.27 99.73h0.8v1.5h-0.8z" fill="#6a9955"/><path d="M1383.90 101.68h0.8v1.5h-0.8zM1384.87 101.68h0.8v1.5h-0.8z" fill="#6a9955"/><path d="M1386.81 101.68h0.8v1.5h-0.8zM1387.78 101.68h0.8v1.5h-0.8zM1388.75 101.68h0.8v1.5h-0.8zM1389.72 101.68h0.8v1.5h-0.8zM1390.69 101.68h0.8v1.5h-0.8zM1391.66 101.68h0.8v1.5h-0.8z" fill="#6a9955"/><path d="M1393.60 101.68h0.8v1.5h-0.8zM1394.57 101.68h0.8v1.5h-0.8zM1395.54 101.68h0.8v1.5h-0.8zM1396.51 101.68h0.8v1.5h-0.8zM1397.48 101.68h0.8v1.5h-0.8zM1398.45 101.68h0.8v1.5h-0.8zM1399.42 101.68h0.8v1.5h-0.8z" fill="#6a9955"/><path d="M1401.36 101.68h0.8v1.5h-0.8zM1402.33 101.68h0.8v1.5h-0.8zM1403.30 101.68h0.8v1.5h-0.8zM1404.27 101.68h0.8v1.5h-0.8zM1405.24 101.68h0.8v1.5h-0.8zM1406.21 101.68h0.8v1.5h-0.8zM1407.18 101.68h0.8v1.5h-0.8z" fill="#6a9955"/><path d="M1383.90 103.64h0.8v1.5h-0.8zM1384.87 103.64h0.8v1.5h-0.8z" fill="#6a9955"/><path d="M1386.81 103.64h0.8v1.5h-0.8zM1387.78 103.64h0.8v1.5h-0.8zM1388.75 103.64h0.8v1.5h-0.8zM1389.72 103.64h0.8v1.5h-0.8zM1390.69 103.64h0.8v1.5h-0.8zM1391.66 103.64h0.8v1.5h-0.8zM1392.63 103.64h0.8v1.5h-0.8zM1393.60 103.64h0.8v1.5h-0.8z" fill="#6a9955"/><path d="M1395.54 103.64h0.8v1.5h-0.8zM1396.51 103.64h0.8v1.5h-0.8zM1397.48 103.64h0.8v1.5h-0.8zM1398.45 103.64h0.8v1.5h-0.8zM1399.42 103.64h0.8v1.5h-0.8zM1400.39 103.64h0.8v1.5h-0.8zM1401.36 103.64h0.8v1.5h-0.8zM1402.33 103.64h0.8v1.5h-0.8zM1403.30 103.64h0.8v1.5h-0.8zM1404.27 103.64h0.8v1.5h-0.8zM1405.24 103.64h0.8v1.5h-0.8zM1406.21 103.64h0.8v1.5h-0.8z" fill="#6a9955"/><path d="M1408.15 103.64h0.8v1.5h-0.8zM1409.12 103.64h0.8v1.5h-0.8zM1410.09 103.64h0.8v1.5h-0.8zM1411.06 103.64h0.8v1.5h-0.8zM1412.03 103.64h0.8v1.5h-0.8zM1413.00 103.64h0.8v1.5h-0.8zM1413.97 103.64h0.8v1.5h-0.8zM1414.94 103.64h0.8v1.5h-0.8zM1415.91 103.64h0.8v1.5h-0.8z" fill="#6a9955"/><path d="M1417.85 103.64h0.8v1.5h-0.8zM1418.82 103.64h0.8v1.5h-0.8z" fill="#6a9955"/><path d="M1420.76 103.64h0.8v1.5h-0.8zM1421.73 103.64h0.8v1.5h-0.8zM1422.70 103.64h0.8v1.5h-0.8z" fill="#6a9955"/><path d="M1424.64 103.64h0.8v1.5h-0.8zM1425.61 103.64h0.8v1.5h-0.8zM1426.58 103.64h0.8v1.5h-0.8zM1427.55 103.64h0.8v1.5h-0.8z" fill="#6a9955"/><path d="M1429.49 103.64h0.8v1.5h-0.8zM1430.46 103.64h0.8v1.5h-0.8zM1431.43 103.64h0.8v1.5h-0.8zM1432.40 103.64h0.8v1.5h-0.8zM1433.37 103.64h0.8v1.5h-0.8zM1434.34 103.64h0.8v1.5h-0.8z" fill="#6a9955"/><path d="M1383.90 105.59h0.8v1.5h-0.8zM1384.87 105.59h0.8v1.5h-0.8z" fill="#6a9955"/><path d="M1386.81 105.59h0.8v1.5h-0.8zM1387.78 105.59h0.8v1.5h-0.8zM1388.75 105.59h0.8v1.5h-0.8zM1389.72 105.59h0.8v1.5h-0.8zM1390.69 105.59h0.8v1.5h-0.8z" fill="#6a9955"/><path d="M1392.63 105.59h0.8v1.5h-0.8zM1393.60 105.59h0.8v1.5h-0.8zM1394.57 105.59h0.8v1.5h-0.8zM1395.54 105.59h0.8v1.5h-0.8zM1396.51 105.59h0.8v1.5h-0.8zM1397.48 105.59h0.8v1.5h-0.8zM1398.45 105.59h0.8v1.5h-0.8zM1399.42 105.59h0.8v1.5h-0.8zM1400.39 105.59h0.8v1.5h-0.8z" fill="#6a9955"/><path d="M1402.33 105.59h0.8v1.5h-0.8zM1403.30 105.59h0.8v1.5h-0.8zM1404.27 105.59h0.8v1.5h-0.8z" fill="#6a9955"/><path d="M1406.21 105.59h0.8v1.5h-0.8zM1407.18 105.59h0.8v1.5h-0.8z" fill="#6a9955"/><path d="M1409.12 105.59h0.8v1.5h-0.8zM1410.09 105.59h0.8v1.5h-0.8zM1411.06 105.59h0.8v1.5h-0.8zM1412.03 105.59h0.8v1.5h-0.8zM1413.00 105.59h0.8v1.5h-0.8zM1413.97 105.59h0.8v1.5h-0.8z" fill="#6a9955"/><path d="M1415.91 105.59h0.8v1.5h-0.8zM1416.88 105.59h0.8v1.5h-0.8zM1417.85 105.59h0.8v1.5h-0.8z" fill="#6a9955"/><path d="M1419.79 105.59h0.8v1.5h-0.8zM1420.76 105.59h0.8v1.5h-0.8z" fill="#6a9955"/><path d="M1422.70 105.59h0.8v1.5h-0.8zM1423.67 105.59h0.8v1.5h-0.8zM1424.64 105.59h0.8v1.5h-0.8zM1425.61 105.59h0.8v1.5h-0.8z" fill="#6a9955"/><path d="M1427.55 105.59h0.8v1.5h-0.8zM1428.52 105.59h0.8v1.5h-0.8zM1429.49 105.59h0.8v1.5h-0.8zM1430.46 105.59h0.8v1.5h-0.8zM1431.43 105.59h0.8v1.5h-0.8z" fill="#6a9955"/><path d="M1383.90 109.50h0.8v1.5h-0.8zM1384.87 109.50h0.8v1.5h-0.8zM1385.84 109.50h0.8v1.5h-0.8zM1386.81 109.50h0.8v1.5h-0.8zM1387.78 109.50h0.8v1.5h-0.8zM1388.75 109.50h0.8v1.5h-0.8zM1389.72 109.50h0.8v1.5h-0.8zM1390.69 109.50h0.8v1.5h-0.8zM1391.66 109.50h0.8v1.5h-0.8zM1392.63 109.50h0.8v1.5h-0.8zM1393.60 109.50h0.8v1.5h-0.8zM1394.57 109.50h0.8v1.5h-0.8zM1395.54 109.50h0.8v1.5h-0.8zM1396.51 109.50h0.8v1.5h-0.8zM1397.48 109.50h0.8v1.5h-0.8zM1398.45 109.50h0.8v1.5h-0.8zM1399.42 109.50h0.8v1.5h-0.8zM1400.39 109.50h0.8v1.5h-0.8zM1401.36 109.50h0.8v1.5h-0.8zM1402.33 109.50h0.8v1.5h-0.8zM1403.30 109.50h0.8v1.5h-0.8zM1404.27 109.50h0.8v1.5h-0.8zM1405.24 109.50h0.8v1.5h-0.8zM1406.21 109.50h0.8v1.5h-0.8zM1407.18 109.50h0.8v1.5h-0.8zM1408.15 109.50h0.8v1.5h-0.8zM1409.12 109.50h0.8v1.5h-0.8z" fill="#ce9178"/><path d="M1410.09 109.50h0.8v1.5h-0.8z" fill="#cccccc"/><path d="M1383.90 111.45h0.8v1.5h-0.8zM1384.87 111.45h0.8v1.5h-0.8zM1385.84 111.45h0.8v1.5h-0.8zM1386.81 111.45h0.8v1.5h-0.8z" fill="#569cd6"/><path d="M1388.75 111.45h0.8v1.5h-0.8z" fill="#cccccc"/><path d="M1390.69 111.45h0.8v1.5h-0.8zM1391.66 111.45h0.8v1.5h-0.8zM1392.63 111.45h0.8v1.5h-0.8zM1393.60 111.45h0.8v1.5h-0.8zM1394.57 111.45h0.8v1.5h-0.8zM1395.54 111.45h0.8v1.5h-0.8z" fill="#569cd6"/><path d="M1397.48 111.45h0.8v1.5h-0.8z" fill="#ce9178"/><path d="M1383.90 113.40h0.8v1.5h-0.8zM1384.87 113.40h0.8v1.5h-0.8zM1385.84 113.40h0.8v1.5h-0.8zM1386.81 113.40h0.8v1.5h-0.8zM1387.78 113.40h0.8v1.5h-0.8zM1388.75 113.40h0.8v1.5h-0.8zM1389.72 113.40h0.8v1.5h-0.8zM1390.69 113.40h0.8v1.5h-0.8zM1391.66 113.40h0.8v1.5h-0.8zM1392.63 113.40h0.8v1.5h-0.8zM1393.60 113.40h0.8v1.5h-0.8zM1394.57 113.40h0.8v1.5h-0.8zM1395.54 113.40h0.8v1.5h-0.8zM1396.51 113.40h0.8v1.5h-0.8zM1397.48 113.40h0.8v1.5h-0.8zM1398.45 113.40h0.8v1.5h-0.8zM1399.42 113.40h0.8v1.5h-0.8zM1400.39 113.40h0.8v1.5h-0.8zM1401.36 113.40h0.8v1.5h-0.8zM1402.33 113.40h0.8v1.5h-0.8zM1403.30 113.40h0.8v1.5h-0.8zM1404.27 113.40h0.8v1.5h-0.8z" fill="#ce9178"/><path d="M1383.90 115.35h0.8v1.5h-0.8zM1384.87 115.35h0.8v1.5h-0.8zM1385.84 115.35h0.8v1.5h-0.8zM1386.81 115.35h0.8v1.5h-0.8zM1387.78 115.35h0.8v1.5h-0.8zM1388.75 115.35h0.8v1.5h-0.8zM1389.72 115.35h0.8v1.5h-0.8zM1390.69 115.35h0.8v1.5h-0.8zM1391.66 115.35h0.8v1.5h-0.8zM1392.63 115.35h0.8v1.5h-0.8zM1393.60 115.35h0.8v1.5h-0.8zM1394.57 115.35h0.8v1.5h-0.8zM1395.54 115.35h0.8v1.5h-0.8z" fill="#ce9178"/><path d="M1383.90 117.31h0.8v1.5h-0.8zM1384.87 117.31h0.8v1.5h-0.8zM1385.84 117.31h0.8v1.5h-0.8zM1386.81 117.31h0.8v1.5h-0.8zM1387.78 117.31h0.8v1.5h-0.8zM1388.75 117.31h0.8v1.5h-0.8zM1389.72 117.31h0.8v1.5h-0.8zM1390.69 117.31h0.8v1.5h-0.8zM1391.66 117.31h0.8v1.5h-0.8zM1392.63 117.31h0.8v1.5h-0.8zM1393.60 117.31h0.8v1.5h-0.8z" fill="#ce9178"/><path d="M1383.90 119.26h0.8v1.5h-0.8zM1384.87 119.26h0.8v1.5h-0.8zM1385.84 119.26h0.8v1.5h-0.8zM1386.81 119.26h0.8v1.5h-0.8zM1387.78 119.26h0.8v1.5h-0.8zM1388.75 119.26h0.8v1.5h-0.8zM1389.72 119.26h0.8v1.5h-0.8zM1390.69 119.26h0.8v1.5h-0.8zM1391.66 119.26h0.8v1.5h-0.8zM1392.63 119.26h0.8v1.5h-0.8zM1393.60 119.26h0.8v1.5h-0.8zM1394.57 119.26h0.8v1.5h-0.8z" fill="#ce9178"/><path d="M1383.90 121.21h0.8v1.5h-0.8zM1384.87 121.21h0.8v1.5h-0.8zM1385.84 121.21h0.8v1.5h-0.8zM1386.81 121.21h0.8v1.5h-0.8zM1387.78 121.21h0.8v1.5h-0.8zM1388.75 121.21h0.8v1.5h-0.8zM1389.72 121.21h0.8v1.5h-0.8zM1390.69 121.21h0.8v1.5h-0.8zM1391.66 121.21h0.8v1.5h-0.8zM1392.63 121.21h0.8v1.5h-0.8zM1393.60 121.21h0.8v1.5h-0.8zM1394.57 121.21h0.8v1.5h-0.8zM1395.54 121.21h0.8v1.5h-0.8z" fill="#ce9178"/><path d="M1383.90 123.17h0.8v1.5h-0.8zM1384.87 123.17h0.8v1.5h-0.8zM1385.84 123.17h0.8v1.5h-0.8zM1386.81 123.17h0.8v1.5h-0.8zM1387.78 123.17h0.8v1.5h-0.8zM1388.75 123.17h0.8v1.5h-0.8zM1389.72 123.17h0.8v1.5h-0.8zM1390.69 123.17h0.8v1.5h-0.8zM1391.66 123.17h0.8v1.5h-0.8zM1392.63 123.17h0.8v1.5h-0.8zM1393.60 123.17h0.8v1.5h-0.8zM1394.57 123.17h0.8v1.5h-0.8zM1395.54 123.17h0.8v1.5h-0.8z" fill="#ce9178"/><path d="M1383.90 125.12h0.8v1.5h-0.8zM1384.87 125.12h0.8v1.5h-0.8zM1385.84 125.12h0.8v1.5h-0.8zM1386.81 125.12h0.8v1.5h-0.8zM1387.78 125.12h0.8v1.5h-0.8zM1388.75 125.12h0.8v1.5h-0.8zM1389.72 125.12h0.8v1.5h-0.8zM1390.69 125.12h0.8v1.5h-0.8zM1391.66 125.12h0.8v1.5h-0.8zM1392.63 125.12h0.8v1.5h-0.8zM1393.60 125.12h0.8v1.5h-0.8zM1394.57 125.12h0.8v1.5h-0.8zM1395.54 125.12h0.8v1.5h-0.8z" fill="#ce9178"/><path d="M1383.90 127.07h0.8v1.5h-0.8zM1384.87 127.07h0.8v1.5h-0.8zM1385.84 127.07h0.8v1.5h-0.8zM1386.81 127.07h0.8v1.5h-0.8zM1387.78 127.07h0.8v1.5h-0.8zM1388.75 127.07h0.8v1.5h-0.8zM1389.72 127.07h0.8v1.5h-0.8zM1390.69 127.07h0.8v1.5h-0.8zM1391.66 127.07h0.8v1.5h-0.8zM1392.63 127.07h0.8v1.5h-0.8zM1393.60 127.07h0.8v1.5h-0.8zM1394.57 127.07h0.8v1.5h-0.8z" fill="#ce9178"/><path d="M1383.90 129.02h0.8v1.5h-0.8zM1384.87 129.02h0.8v1.5h-0.8zM1385.84 129.02h0.8v1.5h-0.8zM1386.81 129.02h0.8v1.5h-0.8zM1387.78 129.02h0.8v1.5h-0.8zM1388.75 129.02h0.8v1.5h-0.8zM1389.72 129.02h0.8v1.5h-0.8zM1390.69 129.02h0.8v1.5h-0.8zM1391.66 129.02h0.8v1.5h-0.8zM1392.63 129.02h0.8v1.5h-0.8zM1393.60 129.02h0.8v1.5h-0.8zM1394.57 129.02h0.8v1.5h-0.8zM1395.54 129.02h0.8v1.5h-0.8z" fill="#ce9178"/><path d="M1383.90 130.98h0.8v1.5h-0.8zM1384.87 130.98h0.8v1.5h-0.8zM1385.84 130.98h0.8v1.5h-0.8zM1386.81 130.98h0.8v1.5h-0.8zM1387.78 130.98h0.8v1.5h-0.8zM1388.75 130.98h0.8v1.5h-0.8zM1389.72 130.98h0.8v1.5h-0.8zM1390.69 130.98h0.8v1.5h-0.8zM1391.66 130.98h0.8v1.5h-0.8zM1392.63 130.98h0.8v1.5h-0.8zM1393.60 130.98h0.8v1.5h-0.8zM1394.57 130.98h0.8v1.5h-0.8zM1395.54 130.98h0.8v1.5h-0.8z" fill="#ce9178"/><path d="M1383.90 132.93h0.8v1.5h-0.8zM1384.87 132.93h0.8v1.5h-0.8zM1385.84 132.93h0.8v1.5h-0.8zM1386.81 132.93h0.8v1.5h-0.8zM1387.78 132.93h0.8v1.5h-0.8zM1388.75 132.93h0.8v1.5h-0.8zM1389.72 132.93h0.8v1.5h-0.8zM1390.69 132.93h0.8v1.5h-0.8zM1391.66 132.93h0.8v1.5h-0.8zM1392.63 132.93h0.8v1.5h-0.8zM1393.60 132.93h0.8v1.5h-0.8zM1394.57 132.93h0.8v1.5h-0.8zM1395.54 132.93h0.8v1.5h-0.8z" fill="#ce9178"/><path d="M1383.90 134.88h0.8v1.5h-0.8zM1384.87 134.88h0.8v1.5h-0.8zM1385.84 134.88h0.8v1.5h-0.8zM1386.81 134.88h0.8v1.5h-0.8zM1387.78 134.88h0.8v1.5h-0.8zM1388.75 134.88h0.8v1.5h-0.8zM1389.72 134.88h0.8v1.5h-0.8zM1390.69 134.88h0.8v1.5h-0.8zM1391.66 134.88h0.8v1.5h-0.8zM1392.63 134.88h0.8v1.5h-0.8zM1393.60 134.88h0.8v1.5h-0.8zM1394.57 134.88h0.8v1.5h-0.8z" fill="#ce9178"/><path d="M1383.90 136.84h0.8v1.5h-0.8zM1384.87 136.84h0.8v1.5h-0.8zM1385.84 136.84h0.8v1.5h-0.8zM1386.81 136.84h0.8v1.5h-0.8zM1387.78 136.84h0.8v1.5h-0.8zM1388.75 136.84h0.8v1.5h-0.8zM1389.72 136.84h0.8v1.5h-0.8zM1390.69 136.84h0.8v1.5h-0.8zM1391.66 136.84h0.8v1.5h-0.8zM1392.63 136.84h0.8v1.5h-0.8zM1393.60 136.84h0.8v1.5h-0.8zM1394.57 136.84h0.8v1.5h-0.8z" fill="#ce9178"/><path d="M1383.90 138.79h0.8v1.5h-0.8zM1384.87 138.79h0.8v1.5h-0.8zM1385.84 138.79h0.8v1.5h-0.8zM1386.81 138.79h0.8v1.5h-0.8zM1387.78 138.79h0.8v1.5h-0.8zM1388.75 138.79h0.8v1.5h-0.8zM1389.72 138.79h0.8v1.5h-0.8zM1390.69 138.79h0.8v1.5h-0.8zM1391.66 138.79h0.8v1.5h-0.8zM1392.63 138.79h0.8v1.5h-0.8zM1393.60 138.79h0.8v1.5h-0.8zM1394.57 138.79h0.8v1.5h-0.8z" fill="#ce9178"/><path d="M1383.90 140.74h0.8v1.5h-0.8zM1384.87 140.74h0.8v1.5h-0.8zM1385.84 140.74h0.8v1.5h-0.8zM1386.81 140.74h0.8v1.5h-0.8zM1387.78 140.74h0.8v1.5h-0.8zM1388.75 140.74h0.8v1.5h-0.8zM1389.72 140.74h0.8v1.5h-0.8zM1390.69 140.74h0.8v1.5h-0.8zM1391.66 140.74h0.8v1.5h-0.8zM1392.63 140.74h0.8v1.5h-0.8zM1393.60 140.74h0.8v1.5h-0.8zM1394.57 140.74h0.8v1.5h-0.8z" fill="#ce9178"/><path d="M1383.90 142.70h0.8v1.5h-0.8zM1384.87 142.70h0.8v1.5h-0.8zM1385.84 142.70h0.8v1.5h-0.8zM1386.81 142.70h0.8v1.5h-0.8zM1387.78 142.70h0.8v1.5h-0.8zM1388.75 142.70h0.8v1.5h-0.8zM1389.72 142.70h0.8v1.5h-0.8zM1390.69 142.70h0.8v1.5h-0.8zM1391.66 142.70h0.8v1.5h-0.8zM1392.63 142.70h0.8v1.5h-0.8zM1393.60 142.70h0.8v1.5h-0.8zM1394.57 142.70h0.8v1.5h-0.8zM1395.54 142.70h0.8v1.5h-0.8z" fill="#ce9178"/><path d="M1383.90 144.65h0.8v1.5h-0.8zM1384.87 144.65h0.8v1.5h-0.8zM1385.84 144.65h0.8v1.5h-0.8zM1386.81 144.65h0.8v1.5h-0.8zM1387.78 144.65h0.8v1.5h-0.8zM1388.75 144.65h0.8v1.5h-0.8zM1389.72 144.65h0.8v1.5h-0.8zM1390.69 144.65h0.8v1.5h-0.8zM1391.66 144.65h0.8v1.5h-0.8zM1392.63 144.65h0.8v1.5h-0.8zM1393.60 144.65h0.8v1.5h-0.8zM1394.57 144.65h0.8v1.5h-0.8z" fill="#ce9178"/><path d="M1383.90 146.60h0.8v1.5h-0.8zM1384.87 146.60h0.8v1.5h-0.8zM1385.84 146.60h0.8v1.5h-0.8zM1386.81 146.60h0.8v1.5h-0.8zM1387.78 146.60h0.8v1.5h-0.8zM1388.75 146.60h0.8v1.5h-0.8zM1389.72 146.60h0.8v1.5h-0.8zM1390.69 146.60h0.8v1.5h-0.8zM1391.66 146.60h0.8v1.5h-0.8zM1392.63 146.60h0.8v1.5h-0.8zM1393.60 146.60h0.8v1.5h-0.8zM1394.57 146.60h0.8v1.5h-0.8z" fill="#ce9178"/><path d="M1383.90 148.56h0.8v1.5h-0.8zM1384.87 148.56h0.8v1.5h-0.8zM1385.84 148.56h0.8v1.5h-0.8zM1386.81 148.56h0.8v1.5h-0.8zM1387.78 148.56h0.8v1.5h-0.8zM1388.75 148.56h0.8v1.5h-0.8zM1389.72 148.56h0.8v1.5h-0.8zM1390.69 148.56h0.8v1.5h-0.8zM1391.66 148.56h0.8v1.5h-0.8zM1392.63 148.56h0.8v1.5h-0.8zM1393.60 148.56h0.8v1.5h-0.8z" fill="#ce9178"/><path d="M1383.90 150.51h0.8v1.5h-0.8zM1384.87 150.51h0.8v1.5h-0.8zM1385.84 150.51h0.8v1.5h-0.8zM1386.81 150.51h0.8v1.5h-0.8zM1387.78 150.51h0.8v1.5h-0.8zM1388.75 150.51h0.8v1.5h-0.8zM1389.72 150.51h0.8v1.5h-0.8zM1390.69 150.51h0.8v1.5h-0.8zM1391.66 150.51h0.8v1.5h-0.8zM1392.63 150.51h0.8v1.5h-0.8zM1393.60 150.51h0.8v1.5h-0.8zM1394.57 150.51h0.8v1.5h-0.8z" fill="#ce9178"/><path d="M1383.90 152.46h0.8v1.5h-0.8zM1384.87 152.46h0.8v1.5h-0.8zM1385.84 152.46h0.8v1.5h-0.8zM1386.81 152.46h0.8v1.5h-0.8zM1387.78 152.46h0.8v1.5h-0.8zM1388.75 152.46h0.8v1.5h-0.8zM1389.72 152.46h0.8v1.5h-0.8zM1390.69 152.46h0.8v1.5h-0.8zM1391.66 152.46h0.8v1.5h-0.8zM1392.63 152.46h0.8v1.5h-0.8zM1393.60 152.46h0.8v1.5h-0.8zM1394.57 152.46h0.8v1.5h-0.8z" fill="#ce9178"/><path d="M1383.90 154.41h0.8v1.5h-0.8z" fill="#ce9178"/><path d="M1385.84 154.41h0.8v1.5h-0.8z" fill="#ffd700"/><path d="M1386.81 154.41h0.8v1.5h-0.8zM1387.78 154.41h0.8v1.5h-0.8zM1388.75 154.41h0.8v1.5h-0.8zM1389.72 154.41h0.8v1.5h-0.8zM1390.69 154.41h0.8v1.5h-0.8zM1391.66 154.41h0.8v1.5h-0.8zM1392.63 154.41h0.8v1.5h-0.8zM1393.60 154.41h0.8v1.5h-0.8zM1394.57 154.41h0.8v1.5h-0.8z" fill="#cccccc"/><path d="M1396.51 154.41h0.8v1.5h-0.8zM1397.48 154.41h0.8v1.5h-0.8z" fill="#cccccc"/><path d="M1399.42 154.41h0.8v1.5h-0.8zM1400.39 154.41h0.8v1.5h-0.8zM1401.36 154.41h0.8v1.5h-0.8z" fill="#ce9178"/><path d="M1402.33 154.41h0.8v1.5h-0.8z" fill="#ffd700"/><path d="M1403.30 154.41h0.8v1.5h-0.8z" fill="#cccccc"/></g></svg>
<div class="abs" style="left:1496px;top:79px;width:20px;height:1096px;border-left:1px solid #191919"></div><div class="abs" style="left:1497px;top:80.7px;width:18.5px;height:1.7px;background:#a8a8a8"></div>
  <div id="curline" class="abs" style="left:92px;top:81px;width:1288px;height:24px;border:2px solid #282828;border-right:none"></div>
  <div class="ln" style="top:81px;white-space:pre"><span style="color:#cccccc">1</span>
<span>2</span>
<span>3</span>
<span>4</span>
<span>5</span>
<span>6</span>
<span>7</span>
<span>8</span>
<span>9</span>
<span>10</span>
<span>11</span>
<span>12</span>
<span>13</span>
<span>14</span>
<span>15</span>
<span>16</span>
<span>17</span>
<span>18</span>
<span>19</span>
<span>20</span>
<span>21</span>
<span>22</span>
<span>23</span>
<span>24</span>
<span>25</span>
<span>26</span>
<span>27</span>
<span>28</span>
<span>29</span>
<span>30</span>
<span>31</span>
<span>32</span>
<span>33</span>
<span>34</span>
<span>35</span>
<span>36</span>
<span>37</span>
<span>38</span>
<span>39</span>
<span>40</span>
<span>41</span></div>
  <div class="code" style="top:81px"><span class="c">// QVD Profiling Data Export</span>
<span class="c">// Generated: 2025-11-04T07:18:37.356Z</span>
<span class="c">// Source QVD: inventory_parts.qvd</span>
<span class="c">// Delimiter: Semicolon (;)</span>
<span class="c">// Max rows per field: 20</span>
<span class="c">//</span>
<span class="c">// This script loads value distribution data for analyzed fields</span>
<span class="c">//</span>

<span class="c">// Field: inventory_id</span>
<span class="c">// Total Rows: 580,251</span>
<span class="c">// Unique Values: 528,744</span>
<span class="c">// WARNING: Distribution truncated to top 1000 values</span>
<span class="c">// NOTE: Exporting top 20 values out of 1000 total</span>

<span class="s">[inventory_id_Distribution]</span><span class="w">:</span>
<span class="k">LOAD</span><span class="w"> <span style="display:inline-block;transform:translateY(4.2px) scale(1.4);transform-origin:50% 38%">*</span> </span><span class="k">INLINE</span> <span class="s">[</span>
<span class="s">Value;Count;Percentage</span>
<span class="s">1305;769;0.13</span>
<span class="s">58;434;0.07</span>
<span class="s">621;344;0.06</span>
<span class="s">1537;335;0.06</span>
<span class="s">1116;329;0.06</span>
<span class="s">1184;310;0.05</span>
<span class="s">423;306;0.05</span>
<span class="s">1189;297;0.05</span>
<span class="s">1495;295;0.05</span>
<span class="s">1198;285;0.05</span>
<span class="s">437;278;0.05</span>
<span class="s">330;275;0.05</span>
<span class="s">103;271;0.05</span>
<span class="s">577;268;0.05</span>
<span class="s">1321;264;0.05</span>
<span class="s">206;260;0.04</span>
<span class="s">955;257;0.04</span>
<span class="s">89;248;0.04</span>
<span class="s">505;243;0.04</span>
<span class="s">820;230;0.04</span>
<span class="s">]</span> <span class="y">(</span><span class="w">Delimiter is </span><span class="s">';'</span><span class="y">)</span><span class="w">;</span></div>
 </div>
 <div id="status" class="abs">
<div class="abs" style="left:0;top:0;width:48px;height:31px;background:#0078d4"></div>
<div class="abs" style="left:1131.4px;top:0;width:47.6px;height:31px;background:#3b3c40"></div>
<div class="abs" style="left:1706px;top:0;width:136px;height:31px;background:#7a6400"></div>
<svg class="abs" style="left:0;top:0" width="2000" height="31"><path d="M18 12.400000000000091 L22.9 17.299999999999955 L18 22.5 M29.6 6.75 L24.4 12.400000000000091 L29.6 17.299999999999955" fill="none" stroke="#ffffff" stroke-width="1.3" stroke-linecap="round" stroke-linejoin="round"/><circle cx="68.3" cy="15" r="7.9" fill="none" stroke="#cccccc" stroke-width="1.3"/><path d="M65.2 11.900000000000091 L71.4 18.09999999999991 M71.4 11.900000000000091 L65.2 18.09999999999991" stroke="#cccccc" stroke-width="1.3" stroke-linecap="round"/><path d="M108.4 7.2999999999999545 L116.3 21.59999999999991 H100.6 Z" fill="none" stroke="#cccccc" stroke-width="1.3" stroke-linejoin="round"/><path d="M108.4 12.200000000000045 V17.200000000000045" stroke="#cccccc" stroke-width="1.4"/><circle cx="108.4" cy="19.299999999999955" r="0.8" fill="#cccccc"/><circle cx="1153.3" cy="13.200000000000045" r="6.1" fill="none" stroke="#dddddd" stroke-width="1.3"/><path d="M1157.6 17.59999999999991 L1163 22.799999999999955" stroke="#dddddd" stroke-width="1.4" stroke-linecap="round"/><path d="M1153.3 10.400000000000091 V16 M1150.5 13.200000000000045 H1156.1" stroke="#dddddd" stroke-width="1.3"/><g transform="translate(1620,-2) scale(0.05)"><ellipse cx="465" cy="415" rx="190" ry="100" fill="#cccccc"/><circle cx="395" cy="260" r="80" fill="none" stroke="#cccccc" stroke-width="50"/><circle cx="540" cy="260" r="80" fill="none" stroke="#cccccc" stroke-width="50"/><rect x="350" y="345" width="230" height="105" rx="20" fill="#181818"/><rect x="395" y="370" width="35" height="60" rx="12" fill="#cccccc"/><rect x="490" y="370" width="35" height="60" rx="12" fill="#cccccc"/></g><polygon points="1685.00,6.20 1693.66,11.20 1693.66,21.20 1685.00,26.20 1676.34,21.20 1676.34,11.20" fill="#cccccc"/><text x="1678.6" y="19.5" font-family="Liberation Sans" font-size="9.5" fill="#181818">4</text><text x="1684" y="14.599999999999909" font-family="Liberation Sans" font-size="7.5" fill="#181818">2</text><text x="1685" y="21.299999999999955" font-family="Liberation Sans" font-size="9" fill="#181818">c</text><circle cx="1863.2" cy="15" r="8" fill="none" stroke="#cccccc" stroke-width="1.3"/><path d="M1858.4 20.59999999999991 L1867.6 9.599999999999909" stroke="#cccccc" stroke-width="1.3"/><path d="M1962.2 21.200000000000045 H1975.8 L1973.8 17.59999999999991 V12.599999999999909 Q1973.8 6.7000000000000455 1969 6.7000000000000455 Q1964.2 6.7000000000000455 1964.2 12.599999999999909 V17.59999999999991 Z M1967.6 21.40000000000009 Q1969 24.200000000000045 1970.4 21.40000000000009" fill="none" stroke="#cccccc" stroke-width="1.3" stroke-linejoin="round"/></svg>
<div class="abs" style="left:83px;top:-1.6px;height:31px;line-height:32px;font-size:17.3px;-webkit-text-stroke:0.15px;color:#cccccc;white-space:nowrap;">0</div>
<div class="abs" style="left:123px;top:-1.6px;height:31px;line-height:32px;font-size:17.3px;-webkit-text-stroke:0.15px;color:#cccccc;white-space:nowrap;">0</div>
<div class="abs" style="left:1190px;top:-1.6px;height:31px;line-height:32px;font-size:17.3px;-webkit-text-stroke:0.15px;color:#cccccc;white-space:nowrap;">Ln 1, Col 1</div>
<div class="abs" style="left:1298px;top:-1.6px;height:31px;line-height:32px;font-size:17.3px;-webkit-text-stroke:0.15px;color:#cccccc;white-space:nowrap;">Spaces: 4</div>
<div class="abs" style="left:1399px;top:-1.6px;height:31px;line-height:32px;font-size:17.3px;-webkit-text-stroke:0.15px;color:#cccccc;white-space:nowrap;">UTF-8</div>
<div class="abs" style="left:1473px;top:-1.6px;height:31px;line-height:32px;font-size:17.3px;-webkit-text-stroke:0.15px;color:#cccccc;white-space:nowrap;">LF</div>
<div class="abs" style="left:1516px;top:-1.6px;height:31px;line-height:32px;font-size:15px;color:#cccccc;white-space:nowrap;letter-spacing:1px">{ }</div>
<div class="abs" style="left:1543px;top:-1.6px;height:31px;line-height:32px;font-size:17.3px;-webkit-text-stroke:0.15px;color:#cccccc;white-space:nowrap;">QlikView</div>
<div class="abs" style="left:1720px;top:-1.6px;height:31px;line-height:32px;font-size:17.3px;-webkit-text-stroke:0.15px;color:#ffffff;white-space:nowrap;">Windsurf: {...}</div>
<div class="abs" style="left:1878.5px;top:-1.6px;height:31px;line-height:32px;font-size:17.3px;-webkit-text-stroke:0.15px;color:#cccccc;white-space:nowrap;">Prettier</div>
</div>
</div>
</body></html>
